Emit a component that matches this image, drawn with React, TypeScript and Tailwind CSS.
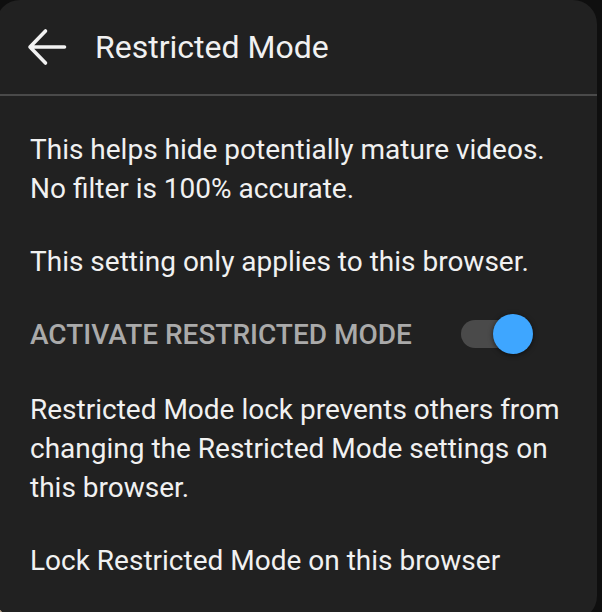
import { useState } from "react";

function BackArrow() {
  return (
    <svg width="40" height="40" viewBox="0 0 40 40" fill="none" className="shrink-0">
      <path d="M37.5 20H3M18.5 4L3 20L18.5 36" stroke="#f1f1f1" strokeWidth="3.6" strokeLinecap="round" strokeLinejoin="round" />
    </svg>
  );
}

function Toggle({ on, onChange }: { on: boolean; onChange: () => void }) {
  return (
    <button onClick={onChange} className="relative w-[72px] h-[40px] flex items-center shrink-0">
      <span className={`block w-[70px] h-[28px] rounded-full ${on ? "bg-[#4a4a4a]" : "bg-[#5c5c5c]"}`} />
      <span
        className={`absolute top-0 w-[40px] h-[40px] rounded-full shadow-[0_1px_5px_rgba(0,0,0,0.6)] ${on ? "left-[32px] bg-[#3ea6ff]" : "left-0 bg-[#bdbdbd]"}`}
      />
    </button>
  );
}

export default function App() {
  const [on, setOn] = useState(true);

  return (
    <div className="relative w-[602px] h-[612px] overflow-hidden bg-[#0f0f0f]" style={{ fontFamily: "Roboto, 'Noto Sans', sans-serif" }}>
      <div className="absolute left-0 bottom-0 w-[14px] h-[14px] bg-[#b8a38c]" />
      <div className="relative ml-[-4px] w-[601px] h-[620px] rounded-[24px] bg-[#212121] text-[#f1f1f1]">
        <div className="h-[96px] flex items-center pl-[31px] border-b-2 border-[#4a4a4a]">
          <BackArrow />
          <span className="ml-[28px] text-[32px] leading-[40px]">Restricted Mode</span>
        </div>

        <div className="pl-[34px] pr-[20px] pt-[34px] flex flex-col gap-[34px] text-[28px] leading-[39px]">
          <p>
            This helps hide potentially mature videos.
            <br />
            No filter is 100% accurate.
          </p>
          <p>This setting only applies to this browser.</p>
          <div className="flex items-center gap-[49px] -mt-[1px]">
            <span className="font-medium text-[#aaaaaa]">ACTIVATE RESTRICTED MODE</span>
            <Toggle on={on} onChange={() => setOn((v) => !v)} />
          </div>
          <p className="mt-[2px]">
            Restricted Mode lock prevents others from changing the Restricted Mode settings on this browser.
          </p>
          <p>Lock Restricted Mode on this browser</p>
        </div>
      </div>
    </div>
  );
}
